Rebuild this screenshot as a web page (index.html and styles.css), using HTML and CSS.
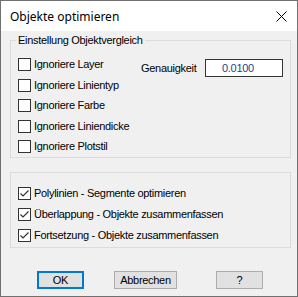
FILE: index.html
```html
<!DOCTYPE html>
<html lang="de">
<head>
  <meta charset="UTF-8" />
  <title>Objekte optimieren</title>
  <link rel="stylesheet" href="styles.css">
</head>
<body>
  <div class="dialog">
    <div class="titlebar">
      <span class="title">Objekte optimieren</span>
      <svg class="close" width="11" height="11" viewBox="0 0 11 11">
        <path d="M0.5 0.5L10.5 10.5M10.5 0.5L0.5 10.5" stroke="#000" stroke-width="1" fill="none"/>
      </svg>
    </div>
    <div class="client">
      <fieldset class="group compare">
        <legend>Einstellung Objektvergleich</legend>
        <div class="compare-grid">
          <div class="checks">
            <label class="check"><span class="box"></span>Ignoriere Layer</label>
            <label class="check"><span class="box"></span>Ignoriere Linientyp</label>
            <label class="check"><span class="box"></span>Ignoriere Farbe</label>
            <label class="check"><span class="box"></span>Ignoriere Liniendicke</label>
            <label class="check"><span class="box"></span>Ignoriere Plotstil</label>
          </div>
          <div class="precision">
            <span>Genauigkeit</span>
            <div class="field">0.0100</div>
          </div>
        </div>
      </fieldset>

      <div class="group options">
        <div class="checks">
          <label class="check"><span class="box"><svg width="11" height="11" viewBox="0 0 11 11"><polyline points="1.5,5.5 4,8 9.5,2.5" stroke="#333" stroke-width="1.2" fill="none"/></svg></span>Polylinien - Segmente optimieren</label>
          <label class="check"><span class="box"><svg width="11" height="11" viewBox="0 0 11 11"><polyline points="1.5,5.5 4,8 9.5,2.5" stroke="#333" stroke-width="1.2" fill="none"/></svg></span>Überlappung - Objekte zusammenfassen</label>
          <label class="check"><span class="box"><svg width="11" height="11" viewBox="0 0 11 11"><polyline points="1.5,5.5 4,8 9.5,2.5" stroke="#333" stroke-width="1.2" fill="none"/></svg></span>Fortsetzung - Objekte zusammenfassen</label>
        </div>
      </div>

      <div class="buttons">
        <button class="default">OK</button>
        <button class="cancel">Abbrechen</button>
        <button class="help">?</button>
      </div>
    </div>
  </div>
</body>
</html>
```

FILE: styles.css
```css
body {
  margin: 0;
  background: #f0f0f0;
}
.dialog {
  width: 298px;
  height: 297px;
  box-sizing: border-box;
  border: 1px solid #707070;
  background: #f0f0f0;
  font-family: "Liberation Sans", Arial, sans-serif;
  font-size: 11px;
  letter-spacing: -0.3px;
  color: #000;
}
.titlebar {
  height: 30px;
  background: white;
  display: flex;
  align-items: center;
  justify-content: space-between;
  padding: 0 10px 0 9px;
}
.title {
  font-family: "Noto Sans", sans-serif;
  font-size: 12px;
  letter-spacing: 0;
}
.close {
  display: block;
}
.client {
  padding: 3px 6px 0 9px;
}
.group {
  border: 1px solid #dcdcdc;
  margin: 0;
}
fieldset.group {
  padding: 11px 7px 4px 7px;
}
legend {
  line-height: 13px;
  padding: 0 2px;
  margin-left: -2px;
}
.compare-grid {
  display: grid;
  grid-template-columns: 123px 1fr;
  align-items: start;
}
.checks {
  display: flex;
  flex-direction: column;
  gap: 7.5px;
}
.options {
  margin-top: 14px;
  padding: 14px 7px 5px 7px;
}
.options .checks {
  gap: 8px;
}
.check {
  display: flex;
  align-items: center;
  height: 13px;
  line-height: 13px;
  white-space: nowrap;
}
.box {
  width: 13px;
  height: 13px;
  box-sizing: border-box;
  border: 1px solid #333;
  background: white;
  margin-right: 3px;
  flex: none;
}
.box svg {
  display: block;
}
.precision {
  display: flex;
  align-items: center;
  justify-content: space-between;
  margin-top: 1px;
}
.field {
  width: 78px;
  height: 18px;
  box-sizing: border-box;
  border: 1px solid #333;
  background: white;
  color: #1b3f8f;
  line-height: 16px;
  padding-left: 16px;
}
.buttons {
  display: flex;
  margin-top: 23px;
  padding-left: 27px;
  gap: 30px;
}
button {
  height: 18px;
  box-sizing: border-box;
  background: #e1e1e1;
  border: 1px solid #adadad;
  font-family: "Liberation Sans", Arial, sans-serif;
  font-size: 11px;
  letter-spacing: -0.3px;
  color: #000;
  padding: 0;
}
.default {
  width: 47px;
  border: 2px solid #0078d7;
}
.cancel {
  width: 63px;
}
.help {
  width: 47px;
  margin-left: 9px;
}
```
